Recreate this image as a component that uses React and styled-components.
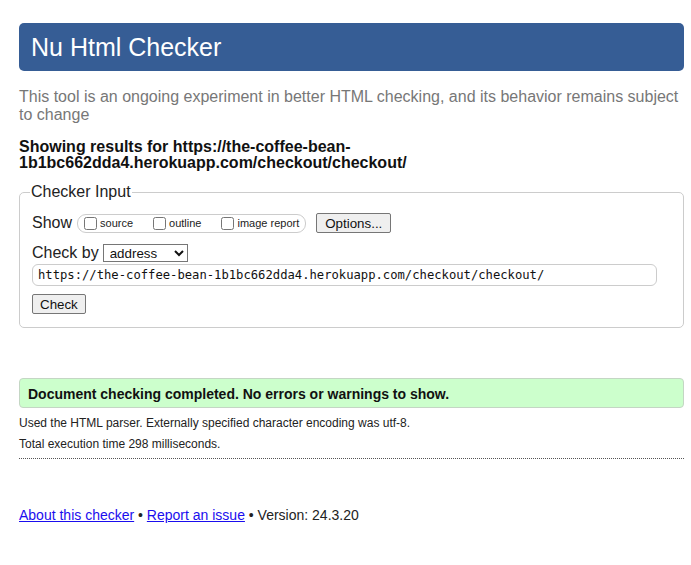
import React from 'react'
import styled, { createGlobalStyle } from 'styled-components'

const GlobalStyle = createGlobalStyle`
  body {
    margin: 0;
    background: #fff;
    font-family: "Liberation Sans", Arial, sans-serif;
    color: #222;
  }
`;

const Page = styled.div`
  padding: 23px 7px 40px 19px;
`;

const Header = styled.h1`
  margin: 0;
  height: 48px;
  display: flex;
  align-items: center;
  padding: 0 12px;
  background: #365d95;
  border-radius: 5px;
  color: #fff;
  font-size: 25px;
  font-weight: normal;
`;

const Intro = styled.p`
  margin: 17px 0 0;
  font-size: 16px;
  line-height: 18px;
  color: #777;
`;

const Results = styled.p`
  margin: 15px 0 0;
  font-size: 16px;
  line-height: 16px;
  font-weight: bold;
  color: #111;
`;

const Fieldset = styled.fieldset`
  margin: 12px 0 0;
  padding: 12px 12px 13px 12px;
  border: 1px solid #ccc;
  border-radius: 5px;
`;

const Legend = styled.legend`
  margin-left: -2px;
  padding: 0 1px;
  font-size: 16px;
  color: #222;
`;

const Row = styled.div`
  display: flex;
  align-items: center;
  height: ${p => p.h || 20}px;
  margin-bottom: ${p => p.mb || 0}px;
`;

const Label = styled.span`
  font-size: 16px;
  color: #222;
  margin-right: ${p => p.gap || 0}px;
`;

const Pill = styled.div`
  display: flex;
  align-items: center;
  gap: 20px;
  height: 17px;
  padding: 0 6px;
  border: 1px solid #ccc;
  border-radius: 9px;
`;

const Option = styled.label`
  display: inline-flex;
  align-items: center;
  gap: 3px;
  font-size: 11px;
  color: #222;
`;

const Box = styled.input`
  width: 13px;
  height: 13px;
  margin: 0;
`;

const Button = styled.button`
  height: 20px;
  margin-left: ${p => p.ml || 0}px;
  padding: 0 ${p => p.px || 7}px;
  font-family: "Liberation Sans", Arial, sans-serif;
  font-size: 13.33px;
  color: #111;
  background: #efefef;
  border: 1px solid #767676;
  border-radius: 2px;
`;

const Select = styled.select`
  width: 85px;
  height: 18px;
  padding: 0 2px;
  font-family: "Liberation Sans", Arial, sans-serif;
  font-size: 13.33px;
  color: #111;
  background: #fff;
  border: 1px solid #767676;
  border-radius: 0;
`;

const UrlInput = styled.input`
  box-sizing: border-box;
  width: 625px;
  height: 22px;
  margin: 0;
  padding: 0 5px;
  font-family: "DejaVu Sans Mono", "Liberation Mono", monospace;
  font-size: 12.2px;
  color: #111;
  border: 1px solid #ccc;
  border-radius: 6px;
`;

const Success = styled.div`
  margin-top: 50px;
  height: 27px;
  display: flex;
  align-items: center;
  padding: 1px 8px 0;
  background: #ccffcc;
  border: 1px solid #c4d6c4;
  border-radius: 4px;
  font-size: 14px;
  font-weight: bold;
  color: #111;
`;

const Details = styled.div`
  padding-bottom: 7px;
  border-bottom: 1px dotted #555;
`;

const Note = styled.p`
  margin: ${p => p.mt}px 0 0;
  font-size: 12px;
  color: #222;
`;

const Footer = styled.p`
  margin: 48px 0 0;
  font-size: 14px;
  color: #222;
`;

const Link = styled.a`
  color: #1a0dee;
  text-decoration: underline;
`;

const App = () => {
  return (
    <Page>
      <GlobalStyle />
      <Header>Nu Html Checker</Header>
      <Intro>
        This tool is an ongoing experiment in better HTML checking, and its behavior remains subject to change
      </Intro>
      <Results>
        Showing results for https://the-coffee-bean-<br />1b1bc662dda4.herokuapp.com/checkout/checkout/
      </Results>
      <Fieldset>
        <Legend>Checker Input</Legend>
        <Row mb={10}>
          <Label gap={5}>Show</Label>
          <Pill>
            <Option><Box type="checkbox" />source</Option>
            <Option><Box type="checkbox" />outline</Option>
            <Option><Box type="checkbox" />image report</Option>
          </Pill>
          <Button ml={10} px={8}>Options...</Button>
        </Row>
        <Row h={19} mb={2}>
          <Label gap={4}>Check by</Label>
          <Select defaultValue="address">
            <option value="address">address</option>
            <option value="file">file upload</option>
            <option value="text">text input</option>
          </Select>
        </Row>
        <Row h={22} mb={8}>
          <UrlInput defaultValue="https://the-coffee-bean-1b1bc662dda4.herokuapp.com/checkout/checkout/" />
        </Row>
        <Row>
          <Button>Check</Button>
        </Row>
      </Fieldset>
      <Success>Document checking completed. No errors or warnings to show.</Success>
      <Details>
        <Note mt={8}>Used the HTML parser. Externally specified character encoding was utf-8.</Note>
        <Note mt={7}>Total execution time 298 milliseconds.</Note>
      </Details>
      <Footer>
        <Link href="#">About this checker</Link> • <Link href="#">Report an issue</Link> • Version: 24.3.20
      </Footer>
    </Page>
  )
}

export default App
